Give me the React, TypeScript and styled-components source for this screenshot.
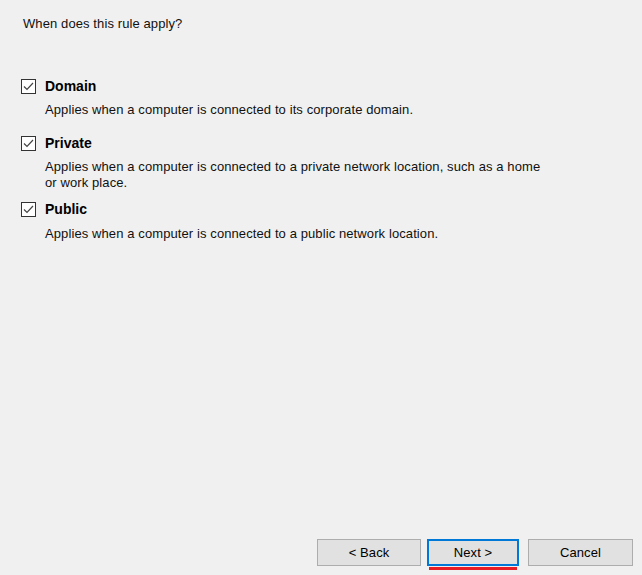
import React from "react";
import styled, { createGlobalStyle } from "styled-components";

const Global = createGlobalStyle`
  html, body { margin: 0; padding: 0; background: #f0f0f0; }
  body { font-family: "Liberation Sans", Arial, sans-serif; color: #000; }
`;

const Page = styled.div`
  display: flex;
  flex-direction: column;
  height: 575px;
  width: 642px;
  box-sizing: border-box;
  background: #f0f0f0;
`;

const Title = styled.div`
  font-size: 13px;
  letter-spacing: 0.1px;
  line-height: 16px;
  padding: 16px 0 0 23px;
  color: #111;
`;

const Options = styled.div`
  display: flex;
  flex-direction: column;
  padding: 46px 0 0 21px;
`;

const Option = styled.div<{ $after: number }>`
  display: flex;
  flex-direction: column;
  margin-bottom: ${(p) => p.$after}px;
`;

const LabelRow = styled.label`
  display: flex;
  align-items: center;
  gap: 9px;
  height: 16px;
  font-size: 14px;
  font-weight: bold;
`;

const Box = styled.span`
  width: 15px;
  height: 15px;
  box-sizing: border-box;
  border: 1px solid #333;
  background: #fff;
  display: flex;
  align-items: center;
  justify-content: center;
`;

const Desc = styled.div<{ $top: number }>`
  margin: ${(p) => p.$top}px 0 0 24px;
  font-size: 13px;
  letter-spacing: 0.1px;
  line-height: 16px;
  max-width: 508px;
  color: #111;
`;

const Spacer = styled.div`
  flex: 1;
`;

const Buttons = styled.div`
  display: flex;
  justify-content: flex-end;
  align-items: flex-start;
  padding: 0 9px 9px 0;
`;

const Button = styled.button<{ $w: number; $primary?: boolean; $gap?: number }>`
  width: ${(p) => p.$w}px;
  height: 27px;
  margin-left: ${(p) => p.$gap ?? 0}px;
  box-sizing: border-box;
  background: #e1e1e1;
  border: ${(p) => (p.$primary ? "2px solid #0078d7" : "1px solid #adadad")};
  font-family: "Liberation Sans", Arial, sans-serif;
  font-size: 13px;
  letter-spacing: 0.1px;
  color: #000;
  padding: 0;
  position: relative;
  ${(p) =>
    p.$primary
      ? `&::after { content: ""; position: absolute; left: 0; right: 0; bottom: -6px; height: 3px; background: #e81c24; }`
      : ""}
`;

const Check = () => (
  <svg width="11" height="11" viewBox="0 0 11 11">
    <path d="M1 5.5 L4 8.5 L10 2" fill="none" stroke="#444" strokeWidth="1.2" />
  </svg>
);

const options = [
  { label: "Domain", desc: "Applies when a computer is connected to its corporate domain.", after: 17, top: 8 },
  {
    label: "Private",
    desc: "Applies when a computer is connected to a private network location, such as a home or work place.",
    after: 10,
    top: 8,
  },
  { label: "Public", desc: "Applies when a computer is connected to a public network location.", after: 0, top: 9 },
];

export default function App() {
  return (
    <Page>
      <Global />
      <Title>When does this rule apply?</Title>
      <Options>
        {options.map((o) => (
          <Option key={o.label} $after={o.after}>
            <LabelRow>
              <Box>
                <Check />
              </Box>
              {o.label}
            </LabelRow>
            <Desc $top={o.top}>{o.desc}</Desc>
          </Option>
        ))}
      </Options>
      <Spacer />
      <Buttons>
        <Button $w={104}>&lt; Back</Button>
        <Button $w={92} $gap={6} $primary>
          Next &gt;
        </Button>
        <Button $w={105} $gap={9}>
          Cancel
        </Button>
      </Buttons>
    </Page>
  );
}
